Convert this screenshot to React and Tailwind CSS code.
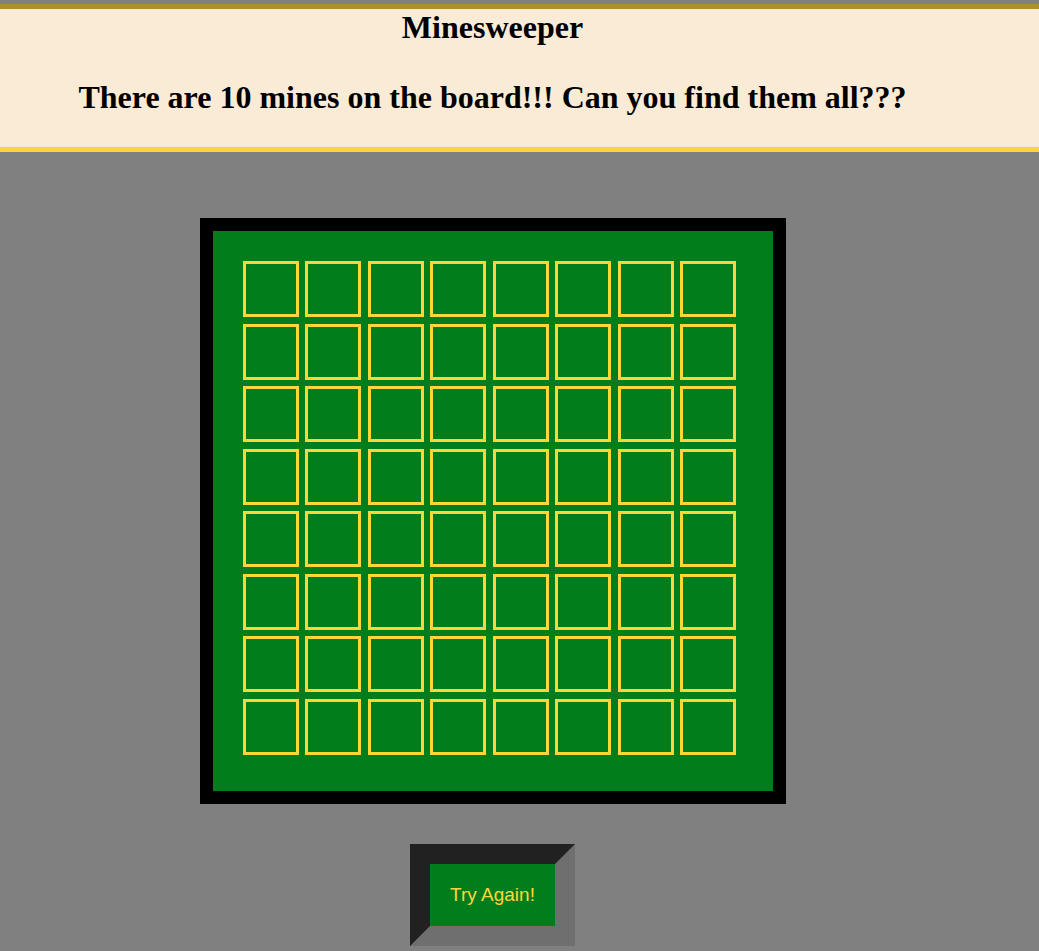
import React from 'react'

const cells = Array.from({ length: 64 }, (_, i) => i)

function Board() {
  return (
    <div className="w-[586px] border-[13px] border-black bg-[#017d1c] p-[30px]">
      <div className="grid w-[500px] grid-cols-8">
        {cells.map((i) => (
          <div key={i} className="h-[62.5px]">
            <div className="h-[56px] w-[56px] border-[3px] border-[#fdd73a] bg-[#017d1c]" />
          </div>
        ))}
      </div>
    </div>
  )
}

export default function App() {
  return (
    <div className="min-h-screen bg-[#808080] pt-1" style={{ fontFamily: '"Liberation Serif", "Times New Roman", serif' }}>
      <header className="border-t-[5px] border-b-[5px] border-t-[#af8f28] border-b-[#fdd33f] bg-[#faebd7]">
        <div className="w-[985px] pb-[31px] text-center font-bold text-black">
          <h1 className="text-[32px] leading-[37px]">Minesweeper</h1>
          <h2 className="mt-[33px] text-[32px] leading-[37px]">
            There are 10 mines on the board!!! Can you find them all???
          </h2>
        </div>
      </header>

      <div className="flex w-[985px] flex-col items-center">
        <div className="mt-[66px]">
          <Board />
        </div>

        <button
          className="mt-[40px] h-[102px] w-[165px] border-[20px] border-t-[#212121] border-l-[#212121] border-r-[#6f6f6f] border-b-[#6f6f6f] bg-[#017d1c] text-[19px] text-[#fdd73a]"
          style={{ fontFamily: '"Liberation Sans", Arial, sans-serif' }}
        >
          Try Again!
        </button>
      </div>
    </div>
  )
}
